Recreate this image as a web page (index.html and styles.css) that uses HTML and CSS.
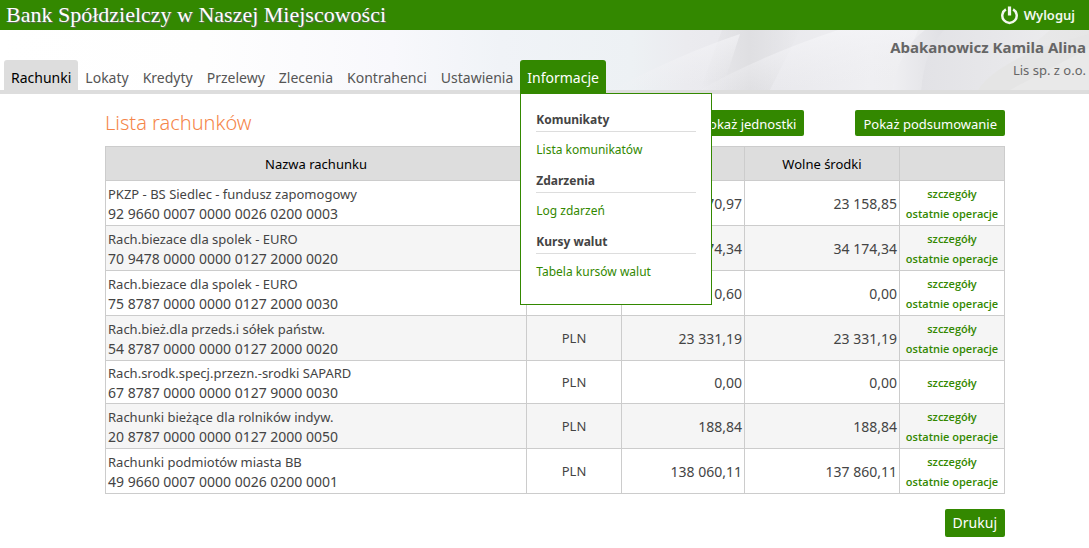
FILE: index.html
```html
<!DOCTYPE html>
<html lang="pl">
<head>
<meta charset="utf-8">
<title>Lista rachunków</title>
<link rel="stylesheet" href="styles.css">
</head>
<body>
<header class="brand-bar">
  <h1 class="brand">Bank Spółdzielczy w Naszej Miejscowości</h1>
  <a class="logout" href="#">
    <svg class="logout-icon" viewBox="0 0 20 20" aria-hidden="true"><path d="M6.2 3.6A7.6 7.6 0 1 0 13.8 3.6" fill="none" stroke="currentColor" stroke-width="2.6"/><path d="M10 0.5V10" stroke="currentColor" stroke-width="3.4"/></svg>
    Wyloguj
  </a>
</header>
<div class="masthead">
  <svg class="backdrop" viewBox="0 0 1089 60" preserveAspectRatio="none" aria-hidden="true">
    <defs>
      <linearGradient id="sky"><stop offset="0" stop-color="#fff"/><stop offset=".19" stop-color="#fefefe"/><stop offset=".36" stop-color="#f8f8fc"/><stop offset=".46" stop-color="#f0f3f7"/><stop offset=".58" stop-color="#edf1f4"/><stop offset=".63" stop-color="#ebebef"/><stop offset=".7" stop-color="#e8e8ec"/><stop offset=".8" stop-color="#efeff2"/><stop offset="1" stop-color="#e6e6e6"/></linearGradient>
      <linearGradient id="ray" x1="0" y1="0" x2=".35" y2="1"><stop offset="0" stop-color="#f5f5f8"/><stop offset="1" stop-color="#f1f1f4" stop-opacity="0"/></linearGradient>
      <linearGradient id="shade"><stop offset="0" stop-color="#dfdfe2" stop-opacity="0"/><stop offset=".5" stop-color="#dfdfe2"/><stop offset="1" stop-color="#dfdfe2" stop-opacity="0"/></linearGradient>
      <linearGradient id="fold"><stop offset="0" stop-color="#efeff2"/><stop offset="1" stop-color="#dfdfe3"/></linearGradient>
      <linearGradient id="sheet"><stop offset="0" stop-color="#e2e2e6"/><stop offset="1" stop-color="#ebebed"/></linearGradient>
    </defs>
    <path d="M0 0H1089V60H0Z" fill="url(#sky)"/>
    <path d="M700 60L722 0H800L770 60Z" fill="url(#shade)"/>
    <path d="M612 60Q680 24 740 4L722 60Z" fill="url(#ray)"/>
    <path d="M700 60Q760 26 838 0H918L895 60Z" fill="url(#ray)"/>
    <path d="M892 60Q900 18 925 0H948Q924 22 921 60Z" fill="url(#fold)"/>
    <path d="M921 60Q924 22 944 0H1050L980 60Z" fill="url(#sheet)"/>
    <path d="M978 60Q990 40 1040 18L1089 4V60Z" fill="#e5e5e5"/>
    <path d="M1010 60L1089 18V60Z" fill="#e9e9e9"/>
  </svg>
  <nav class="nav">
    <a class="tab current" href="#">Rachunki</a>
    <a class="tab" href="#">Lokaty</a>
    <a class="tab" href="#">Kredyty</a>
    <a class="tab" href="#">Przelewy</a>
    <a class="tab" href="#">Zlecenia</a>
    <a class="tab" href="#">Kontrahenci</a>
    <a class="tab" href="#">Ustawienia</a>
    <div class="tab-group">
      <a class="tab open" href="#">Informacje</a>
      <div class="menu">
        <h3 class="menu-title">Komunikaty</h3>
        <a class="menu-link" href="#">Lista komunikatów</a>
        <h3 class="menu-title">Zdarzenia</h3>
        <a class="menu-link" href="#">Log zdarzeń</a>
        <h3 class="menu-title">Kursy walut</h3>
        <a class="menu-link" href="#">Tabela kursów walut</a>
      </div>
    </div>
  </nav>
  <div class="user">
    <strong class="user-name">Abakanowicz Kamila Alina</strong>
    <span class="user-company">Lis sp. z o.o.</span>
  </div>
</div>
<main class="content">
  <div class="toolbar">
    <h2 class="heading">Lista rachunków</h2>
    <button class="button" type="button">Pokaż jednostki</button>
    <button class="button" type="button">Pokaż podsumowanie</button>
  </div>
  <table class="accounts">
    <colgroup><col class="col-name"><col class="col-currency"><col class="col-balance"><col class="col-free"><col class="col-actions"></colgroup>
    <thead>
      <tr><th>Nazwa rachunku</th><th></th><th></th><th>Wolne środki</th><th></th></tr>
    </thead>
    <tbody>
      <tr><td>PKZP - BS Siedlec - fundusz zapomogowy<span class="number">92 9660 0007 0000 0026 0200 0003</span></td><td class="currency"></td><td class="amount">70,97</td><td class="amount">23 158,85</td><td class="actions"><a href="#">szczegóły</a><a href="#">ostatnie operacje</a></td></tr>
      <tr><td>Rach.biezace dla spolek - EURO<span class="number">70 9478 0000 0000 0127 2000 0020</span></td><td class="currency"></td><td class="amount">74,34</td><td class="amount">34 174,34</td><td class="actions"><a href="#">szczegóły</a><a href="#">ostatnie operacje</a></td></tr>
      <tr><td>Rach.biezace dla spolek - EURO<span class="number">75 8787 0000 0000 0127 2000 0030</span></td><td class="currency"></td><td class="amount">0,60</td><td class="amount">0,00</td><td class="actions"><a href="#">szczegóły</a><a href="#">ostatnie operacje</a></td></tr>
      <tr><td>Rach.bież.dla przeds.i sółek państw.<span class="number">54 8787 0000 0000 0127 2000 0020</span></td><td class="currency">PLN</td><td class="amount">23 331,19</td><td class="amount">23 331,19</td><td class="actions"><a href="#">szczegóły</a><a href="#">ostatnie operacje</a></td></tr>
      <tr><td>Rach.srodk.specj.przezn.-srodki SAPARD<span class="number">67 8787 0000 0000 0127 9000 0030</span></td><td class="currency">PLN</td><td class="amount">0,00</td><td class="amount">0,00</td><td class="actions"><a href="#">szczegóły</a></td></tr>
      <tr><td>Rachunki bieżące dla rolników indyw.<span class="number">20 8787 0000 0000 0127 2000 0050</span></td><td class="currency">PLN</td><td class="amount">188,84</td><td class="amount">188,84</td><td class="actions"><a href="#">szczegóły</a><a href="#">ostatnie operacje</a></td></tr>
      <tr><td>Rachunki podmiotów miasta BB<span class="number">49 9660 0007 0000 0026 0200 0001</span></td><td class="currency">PLN</td><td class="amount">138 060,11</td><td class="amount">137 860,11</td><td class="actions"><a href="#">szczegóły</a><a href="#">ostatnie operacje</a></td></tr>
    </tbody>
  </table>
  <div class="footer-actions"><button class="button print" type="button">Drukuj</button></div>
</main>
</body>
</html>
```
FILE: styles.css
```css
* { box-sizing: border-box; }
body { margin: 0; background: #fff; color: #444; font: 13px/19px "Noto Sans", "Open Sans", sans-serif; }
h1, h2, h3 { margin: 0; }
a { text-decoration: none; }

.brand-bar { display: flex; align-items: center; justify-content: space-between; height: 30px; padding: 0 14px 0 6px; background: #380; color: #fff; }
.brand { font: 22px/30px "Liberation Serif", serif; text-shadow: 1px 1px 1px #666; }
.logout { display: flex; align-items: center; gap: 5px; color: #f2f8ee; font-size: 13px; font-weight: 600; }
.logout-icon { width: 19px; height: 19px; }

.masthead { position: relative; display: flex; justify-content: space-between; height: 64px; padding: 0 3px 0 4px; border-bottom: 4px solid #ddd; }
.backdrop { position: absolute; inset: 0; width: 100%; height: 100%; }
.nav { position: relative; display: flex; align-items: flex-end; }
.tab { display: block; height: 30px; padding: 0 7px; border-radius: 3px 3px 0 0; color: #555; font-size: 14px; line-height: 35px; }
.current { background: #ddd; color: #000; }
.tab-group { position: relative; align-self: flex-end; height: 30px; }
.open { height: 34px; background: #380; color: #fff; }
.menu { position: absolute; top: 33px; left: 0; z-index: 1; width: 192px; padding: 14px 15px 13px; border: 1px solid #380; background: #fff; }
.menu-title { height: 24px; border-bottom: 1px solid #ddd; font-size: 12px; line-height: 23px; color: #444; }
.menu-link { display: block; height: 37px; line-height: 36px; color: #380; font-size: 12px; }
.user { position: relative; display: flex; flex-direction: column; align-items: flex-end; padding-top: 6px; color: #666; }
.user-name { font-size: 15px; line-height: 23px; }
.user-company { font-size: 13px; line-height: 23px; }

.content { padding: 16px 84px 0 105px; }
.toolbar { display: flex; align-items: flex-start; gap: 51px; height: 36px; }
.heading { margin-right: auto; color: #f58549; font-size: 20px; font-weight: 300; line-height: 26px; }
.button { height: 26px; padding: 0 8px; border: 0; border-radius: 2px; background: #380; color: #fff; font: 13px/28px "Noto Sans", "Open Sans", sans-serif; }
.accounts { width: 100%; table-layout: fixed; border-collapse: collapse; }
.col-currency { width: 95px; }
.col-balance { width: 123px; }
.col-free { width: 155px; }
.col-actions { width: 105px; }
.accounts th, .accounts td { padding: 0 2px; border: 1px solid #ccc; }
.accounts th { height: 34px; padding-top: 2px; background: #ddd; color: #000; font-weight: 400; }
.accounts td { height: 43px; padding-top: 1px; }
.accounts tbody tr:nth-child(even) { background: #f5f5f5; }
.number { display: block; font-size: 14px; }
.currency { text-align: center; }
.accounts .amount { text-align: right; font-size: 14px; }
.accounts .actions { padding: 3px 2px 1px; text-align: center; font: 600 11px/20px "Open Sans", "Noto Sans", sans-serif; }
.actions a { display: block; color: #380; }
.footer-actions { display: flex; justify-content: flex-end; padding-top: 15px; }
.print { height: 28px; font-size: 14px; line-height: 28px; }
```
